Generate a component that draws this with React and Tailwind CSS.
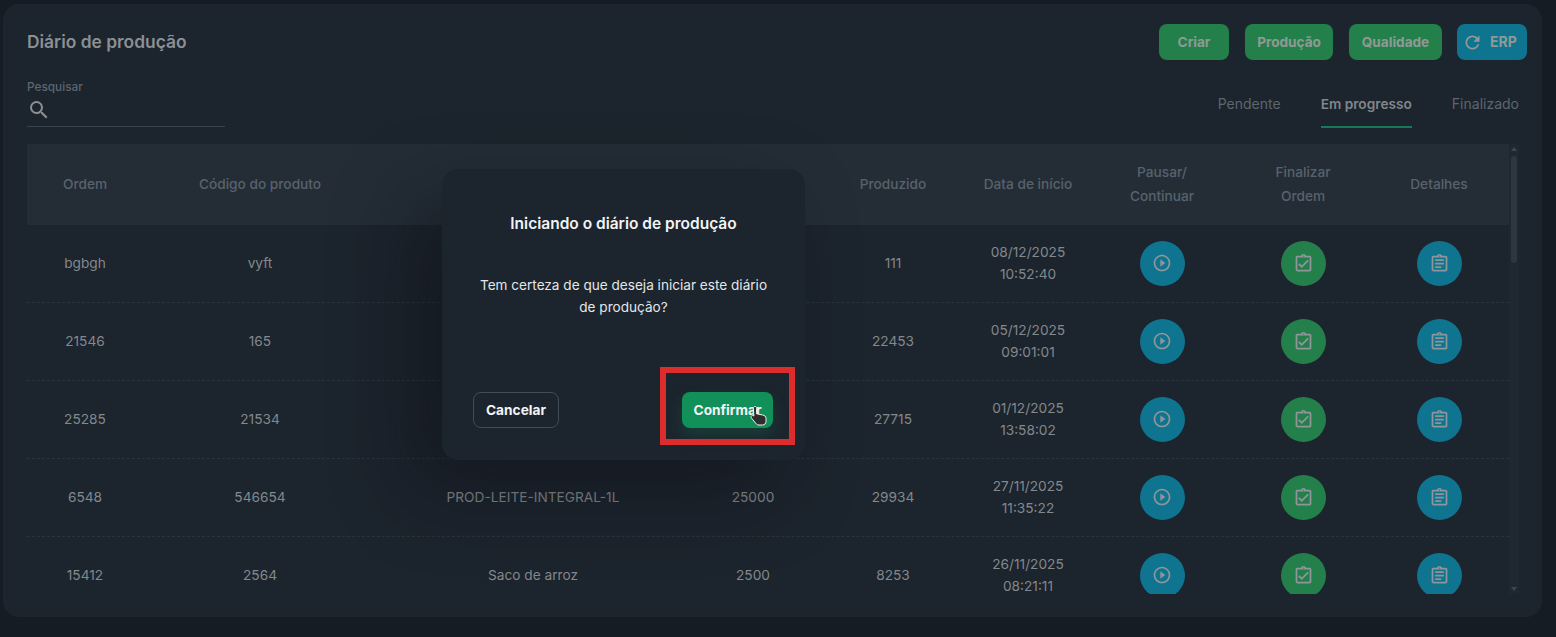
import React from 'react';
import { MdOutlineAssignment, MdOutlineAssignmentTurnedIn, MdPlayCircleOutline, MdRefresh, MdSearch } from 'react-icons/md';

const rows = [
  { ordem: 'bgbgh', codigo: 'vyft', nome: '', qtd: '', produzido: '111', data: '08/12/2025', hora: '10:52:40' },
  { ordem: '21546', codigo: '165', nome: '', qtd: '', produzido: '22453', data: '05/12/2025', hora: '09:01:01' },
  { ordem: '25285', codigo: '21534', nome: '', qtd: '', produzido: '27715', data: '01/12/2025', hora: '13:58:02' },
  { ordem: '6548', codigo: '546654', nome: 'PROD-LEITE-INTEGRAL-1L', qtd: '25000', produzido: '29934', data: '27/11/2025', hora: '11:35:22' },
  { ordem: '15412', codigo: '2564', nome: 'Saco de arroz', qtd: '2500', produzido: '8253', data: '26/11/2025', hora: '08:21:11' },
];

const cols = 'grid grid-cols-[116px_234px_312px_128px_152px_118px_150px_132px_140px] items-center text-center';

function RoundIcon({ color, children }) {
  return (
    <div className={`mx-auto flex h-[45px] w-[45px] items-center justify-center rounded-full text-[#8f9699] ${color}`}>
      {children}
    </div>
  );
}

export default function App() {
  return (
    <div className="relative h-[637px] w-[1556px] overflow-hidden bg-[#161c23] pl-[3px] pt-[4px] font-['Inter',sans-serif]">
      <div className="h-[613px] w-[1539px] rounded-2xl bg-[#1c242d] pl-6 pr-[15px] pt-5">
        <div className="flex h-9 items-center justify-between">
          <h1 className="text-[17.4px] font-semibold text-[#8b9094]">Diário de produção</h1>
          <div className="flex items-center gap-4 text-[13.6px] font-bold text-[#8f9a95]">
            <button className="h-9 w-[70px] rounded-lg bg-[#24804b]">Criar</button>
            <button className="h-9 w-[88px] rounded-lg bg-[#24804b]">Produção</button>
            <button className="h-9 w-[93px] rounded-lg bg-[#24804b]">Qualidade</button>
            <button className="-ml-px flex h-9 w-[70px] items-center gap-[7px] rounded-lg bg-[#0e7490] pl-[5px] text-sm">
              <MdRefresh size={21} />
              ERP
            </button>
          </div>
        </div>

        <div className="mt-[19px] flex h-[65px] items-start justify-between pr-2">
          <div className="w-[198px] border-b border-[#3a444d] pb-1">
            <div className="text-[11.8px] font-medium leading-4 text-[#5c6670]">Pesquisar</div>
            <MdSearch size={24} className="mt-[3px] text-[#8b9094]" />
          </div>
          <div className="flex gap-10 text-sm leading-5">
            <div className="h-[49px] pt-[15px] text-[#5c6670]">Pendente</div>
            <div className="h-[49px] border-b-2 border-[#157a57] pt-[15px] text-[13.7px] font-semibold text-[#80878c]">Em progresso</div>
            <div className="h-[49px] pt-[15px] text-[#5c6670]">Finalizado</div>
          </div>
        </div>

        <div className="relative h-[450px] w-[1492px] overflow-hidden">
          <div className="w-[1482px]">
            <div className={`${cols} h-[81px] bg-[#242d36] pb-[2px] text-[13.7px] font-medium leading-6 text-[#58626c]`}>
              <div>Ordem</div>
              <div>Código do produto</div>
              <div></div>
              <div></div>
              <div>Produzido</div>
              <div>Data de início</div>
              <div>Pausar/<br />Continuar</div>
              <div>Finalizar<br />Ordem</div>
              <div>Detalhes</div>
            </div>
            {rows.map((row) => (
              <div key={row.ordem} className={`${cols} h-[78px] border-b border-dashed border-[#2a343c] pb-px text-[13.7px] leading-[22px] text-[#83888c]`}>
                <div>{row.ordem}</div>
                <div>{row.codigo}</div>
                <div>{row.nome}</div>
                <div>{row.qtd}</div>
                <div>{row.produzido}</div>
                <div>{row.data}<br />{row.hora}</div>
                <RoundIcon color="bg-[#0e7490]"><MdPlayCircleOutline size={20} /></RoundIcon>
                <RoundIcon color="bg-[#24804b]"><MdOutlineAssignmentTurnedIn size={21} /></RoundIcon>
                <RoundIcon color="bg-[#0e7490]"><MdOutlineAssignment size={21} /></RoundIcon>
              </div>
            ))}
          </div>
          <div className="absolute bottom-0 right-0 top-0 w-[10px] bg-[#1f2830]">
            <div className="absolute left-[2px] top-[3px] h-0 w-0 border-x-[3px] border-b-[4px] border-x-transparent border-b-[#3b464e]" />
            <div className="absolute left-[2px] top-[12px] h-[107px] w-[6px] rounded-full bg-[#2c373f]" />
            <div className="absolute bottom-[3px] left-[2px] h-0 w-0 border-x-[3px] border-t-[4px] border-x-transparent border-t-[#3b464e]" />
          </div>
        </div>
      </div>

      <div className="absolute left-[442px] top-[169px] flex h-[291px] w-[363px] flex-col rounded-2xl bg-[#1c242d] px-[31px] shadow-[-30px_30px_80px_rgba(10,14,20,0.45)]">
        <h2 className="mt-[43px] text-center text-[15.5px] font-semibold leading-6 text-[#f2f4f5]">Iniciando o diário de produção</h2>
        <p className="mt-[38px] text-center text-[13.6px] leading-[22px] text-[#e4e7e9]">Tem certeza de que deseja iniciar este diário de produção?</p>
        <div className="mb-[32px] mt-auto flex items-center justify-between pr-[1px]">
          <button className="h-9 w-[86px] rounded-lg border border-[#434c55] text-[13.7px] font-bold text-[#f2f4f5]">Cancelar</button>
          <button className="h-9 w-[91px] rounded-lg bg-[#12905a] text-[13.7px] font-bold text-[#f2f4f5] shadow-[0_8px_16px_rgba(18,144,90,0.24)]">Confirmar</button>
        </div>
      </div>

      <div className="absolute left-[660px] top-[367px] h-[78px] w-[135px] border-[6px] border-[#dc2c2c]" />

      <svg className="absolute left-[750px] top-[405px]" width="18" height="21" viewBox="0 0 18 21">
        <path d="M5 1.5c1 0 1.6.7 1.6 1.7v5.6l6 1.2c2 .4 3.4 1.400 3.400 3.400v3c0 2.200-1.400 3.600-3.600 3.600H9c-1.400 0-2.300-.5-3.100-1.600L1.400 13c-.6-.8-.4-1.700.3-2.200.7-.5 1.600-.3 2.200.3l-.5-7.900C3.300 2.300 4 1.500 5 1.500z" fill="#2d2d2d" stroke="#f2f2f2" strokeWidth="1" strokeLinejoin="round" />
      </svg>
    </div>
  );
}
